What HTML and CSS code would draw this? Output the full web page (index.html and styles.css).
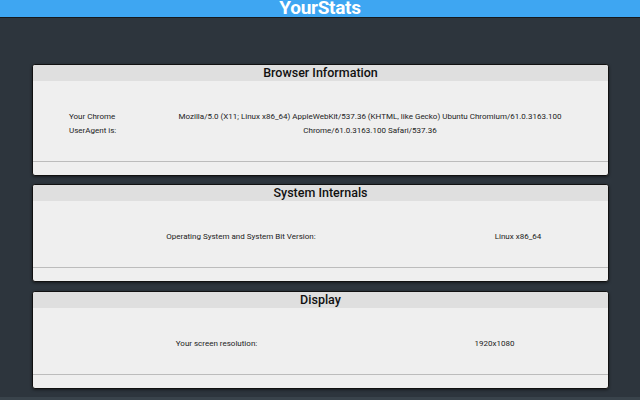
FILE: index.html
```html
<!DOCTYPE html>
<html lang="en">
<head>
    <meta charset="UTF-8">
    <meta name="viewport" content="width=device-width, initial-scale=1.0">
    <title>YourStats</title>
    <link rel="stylesheet" href="styles.css">
</head>
<body>
<div class="topbar">
    <h1>YourStats</h1>
</div>

<div class="content">
    <div class="card">
        <div class="card-title">Browser Information</div>
        <div class="card-body">
            <div class="row row-agent">
                <div class="cell label">Your Chrome UserAgent is:</div>
                <div class="cell">Mozilla/5.0 (X11; Linux x86_64) AppleWebKit/537.36 (KHTML, like Gecko) Ubuntu Chromium/61.0.3163.100 Chrome/61.0.3163.100 Safari/537.36</div>
            </div>
        </div>
        <div class="card-foot"></div>
    </div>

    <div class="card">
        <div class="card-title">System Internals</div>
        <div class="card-body">
            <div class="row row-os">
                <div class="cell">Operating System and System Bit Version:</div>
                <div class="cell">Linux x86_64</div>
            </div>
        </div>
        <div class="card-foot"></div>
    </div>

    <div class="card card-display">
        <div class="card-title">Display</div>
        <div class="card-body">
            <div class="row row-display">
                <div class="cell">Your screen resolution:</div>
                <div class="cell">1920x1080</div>
            </div>
        </div>
        <div class="card-foot"></div>
    </div>
</div>

<div class="bottom-strip"></div>
</body>
</html>
```

FILE: styles.css
```css
:root {
    --bar-blue: #3ea6f2;
    --bg-dark: #2d353d;
    --card-head: #dfdfdf;
    --card-body: #efefef;
    --text: #222;
}

body {
    margin: 0;
    font-family: Roboto, 'Liberation Sans', sans-serif;
    background-color: var(--bg-dark);
    overflow: hidden;
}

/* Top bar */
.topbar {
    background: var(--bar-blue);
    height: 17px;
    border-bottom: 1px solid #15191d;
    text-align: center;
}

.topbar h1 {
    margin: 0;
    color: #fff;
    font-size: 19px;
    font-weight: bold;
    line-height: 18px;
    letter-spacing: -0.3px;
    position: relative;
    top: -1px;
}

/* Cards */
.content {
    padding: 46px 32px 8px 32px;
    display: flex;
    flex-direction: column;
    gap: 8px;
}

.card {
    width: 575px;
    background: var(--card-body);
    border: 1px solid #111;
    border-radius: 3px;
    box-shadow: 0 1px 3px rgba(0, 0, 0, 0.5);
    overflow: hidden;
}

.card-display {
    margin-top: 1px;
}

.card-title {
    background: var(--card-head);
    height: 16px;
    line-height: 16px;
    text-align: center;
    font-size: 12.5px;
    font-weight: 500;
    color: #111;
}

.card-body {
    padding: 29px 0 23px 7px;
}

.card-foot {
    height: 13px;
    border-top: 1px solid #bcbcbc;
}

.row {
    display: grid;
    font-size: 8px;
    line-height: 14px;
    color: var(--text);
}

.cell {
    text-align: center;
}

.row-agent {
    grid-template-columns: 130px 400px;
}

.row-agent .label {
    text-align: left;
    padding-left: 29px;
    padding-right: 45px;
}

.row-os {
    grid-template-columns: 402px 152px;
}

.row-display {
    grid-template-columns: 353px 203px;
}

.bottom-strip {
    height: 10px;
    background: #39434b;
}
```
